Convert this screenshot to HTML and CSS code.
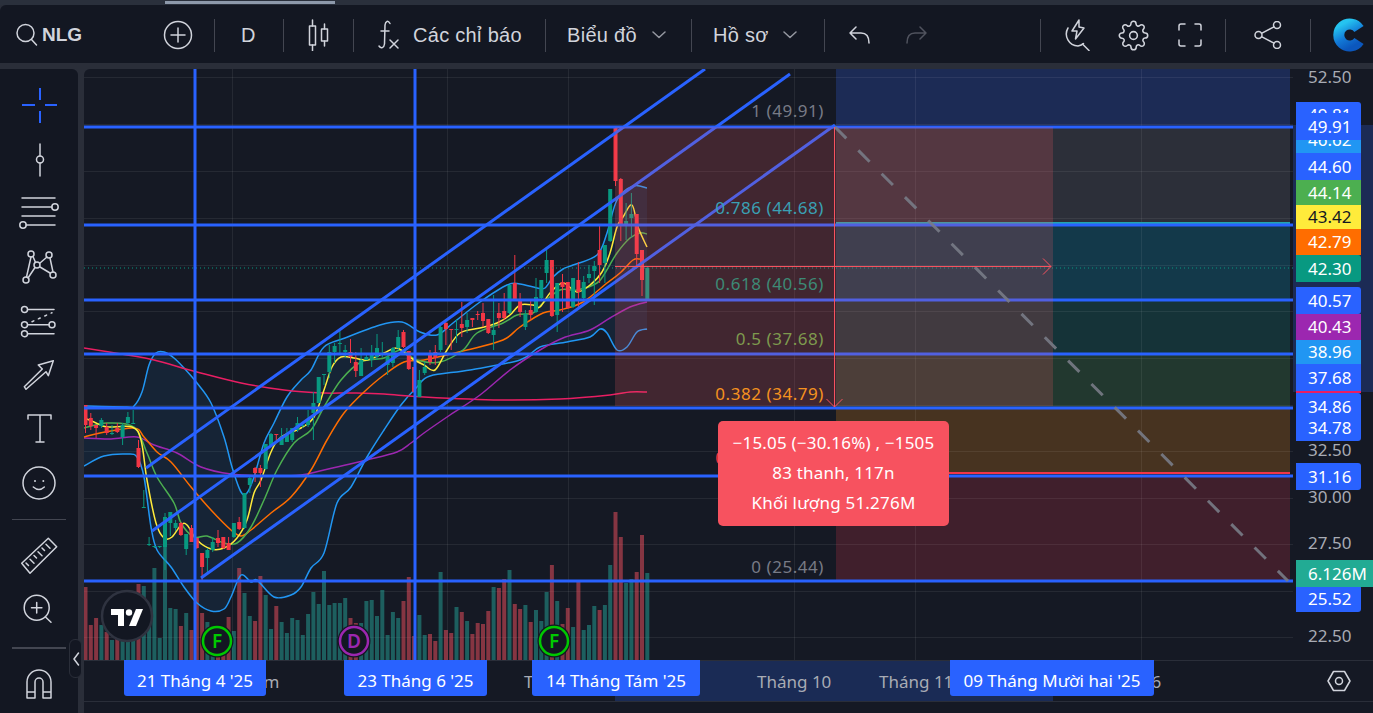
FILE: index.html
```html
<!DOCTYPE html>
<html lang="vi">
<head>
    <meta charset="UTF-8">
    <meta name="viewport" content="width=device-width, initial-scale=1.0">
    <title>NLG - Biểu đồ</title>
    <link rel="stylesheet" href="styles.css">
</head>
<body>
    <div class="top-strip"><span class="scroll-thumb"></span></div>

    <header class="toolbar">
        <div class="cell cell-symbol">
            <svg class="icon" width="24" height="26" viewBox="0 0 24 26"><circle cx="10.5" cy="11" r="8.5"/><path d="M16.5 17.5l5 5.500"/></svg>
            <span class="symbol">NLG</span>
            <svg class="icon add-icon" width="30" height="30" viewBox="0 0 30 30"><circle cx="15" cy="15" r="13.500"/><path d="M15 8v14M8 15h14"/></svg>
        </div>
        <div class="cell cell-interval"><span class="tb-text">D</span></div>
        <div class="cell cell-style">
            <svg class="icon" width="22" height="32" viewBox="0 0 22 32"><path d="M4.500 1v6M4.500 26v6M16.500 5v5M16.500 22v5"/><rect x="1.500" y="7" width="6" height="19"/><rect x="13.500" y="10" width="6" height="12"/></svg>
        </div>
        <div class="cell cell-indicators">
            <svg class="icon" width="22" height="32" viewBox="0 0 22 32"><path d="M12 4.500C10 1 7.500 2 7 6l-.5 19c-.5 4-3.500 5-5.500 2M3 12h8"/><path d="M12 21l8 8M20 21l-8 8"/></svg>
            <span class="tb-text">Các chỉ báo</span>
        </div>
        <div class="cell cell-chart">
            <span class="tb-text">Biểu đồ</span>
            <svg class="icon chevron" width="14" height="8" viewBox="0 0 14 8"><path d="M1 1l6 5.500L13 1"/></svg>
        </div>
        <div class="cell cell-profile">
            <span class="tb-text">Hồ sơ</span>
            <svg class="icon chevron" width="14" height="8" viewBox="0 0 14 8"><path d="M1 1l6 5.500L13 1"/></svg>
        </div>
        <div class="cell cell-history">
            <svg class="icon" width="21" height="18" viewBox="0 0 21 18"><path d="M7 1L1 7l6 6M1 7h11c5 0 8 3 8 10"/></svg>
            <svg class="icon icon-dim redo" width="21" height="18" viewBox="0 0 21 18"><path d="M14 1l6 6-6 6M20 7H9c-5 0-8 3-8 10"/></svg>
        </div>
        <div class="cell cell-actions">
            <svg class="icon" width="28" height="32" viewBox="0 0 28 32"><path d="M6 9A12 12 0 0 0 16 27c2.500-.5 4-1 5.500-2.500"/><path d="M17 1l-7 11h5l-1.500 8L22 9l-5-1z"/><path d="M20.500 25l6.500 6.500"/></svg>
            <svg class="icon gear" width="31" height="31" viewBox="0 0 24 24"><circle cx="12" cy="12" r="3"/><path d="M19.400 15a1.650 1.650 0 0 0 .33 1.820l.06.06a2 2 0 0 1 0 2.830 2 2 0 0 1-2.830 0l-.06-.06a1.650 1.650 0 0 0-1.820-.33 1.650 1.650 0 0 0-1 1.510V21a2 2 0 0 1-2 2 2 2 0 0 1-2-2v-.09A1.650 1.650 0 0 0 9 19.400a1.650 1.650 0 0 0-1.820.33l-.06.06a2 2 0 0 1-2.830 0 2 2 0 0 1 0-2.830l.06-.06a1.650 1.650 0 0 0 .33-1.820 1.650 1.650 0 0 0-1.510-1H3a2 2 0 0 1-2-2 2 2 0 0 1 2-2h.09A1.650 1.650 0 0 0 4.600 9a1.650 1.650 0 0 0-.33-1.820l-.06-.06a2 2 0 0 1 0-2.830 2 2 0 0 1 2.830 0l.06.06a1.650 1.650 0 0 0 1.820.33H9a1.650 1.650 0 0 0 1-1.510V3a2 2 0 0 1 2-2 2 2 0 0 1 2 2v.09a1.650 1.650 0 0 0 1 1.510 1.650 1.650 0 0 0 1.820-.33l.06-.06a2 2 0 0 1 2.830 0 2 2 0 0 1 0 2.830l-.06.06a1.650 1.650 0 0 0-.33 1.820V9a1.650 1.650 0 0 0 1.510 1H21a2 2 0 0 1 2 2 2 2 0 0 1-2 2h-.09a1.650 1.650 0 0 0-1.510 1z"/></svg>
            <svg class="icon" width="24" height="24" viewBox="0 0 24 24"><path d="M7 1H3a2 2 0 0 0-2 2v4M17 1h4a2 2 0 0 1 2 2v4M7 23H3a2 2 0 0 1-2-2v-4M17 23h4a2 2 0 0 0 2-2v-4"/></svg>
        </div>
        <div class="cell cell-share">
            <svg class="icon" width="28" height="28" viewBox="0 0 28 28"><circle cx="4.500" cy="14" r="3.500"/><circle cx="23" cy="4" r="3.500"/><circle cx="23" cy="24" r="3.500"/><path d="M7.500 12.300L20 5.800M7.500 15.700L20 22.200"/></svg>
        </div>
        <div class="cell cell-logo">
            <svg width="33" height="34" viewBox="0 0 33 34">
                <defs><linearGradient id="logoFill" x1="0.2" y1="0" x2="0.7" y2="1"><stop offset="0" stop-color="#25c4f0"/><stop offset="0.55" stop-color="#1279d6"/><stop offset="1" stop-color="#0b57bd"/></linearGradient></defs>
                <path d="M26 11A11 11 0 1 0 26 23" class="logo-ring"/>
            </svg>
        </div>
    </header>

    <div class="workspace">
        <aside class="side-tools">
            <div class="tool"><svg class="tool-icon tool-active" viewBox="0 0 44 44"><path d="M23 5v12M23 28v12M5 22h13M28 22h12"/></svg></div>
            <div class="tool"><svg class="tool-icon" viewBox="0 0 44 44"><path d="M23 7v12M23 26v13"/><circle cx="23" cy="22.500" r="3.500"/></svg></div>
            <div class="tool"><svg class="tool-icon" viewBox="0 0 44 44"><path d="M5 7h33M5 16h30M5 25h33M9 34h29"/><circle cx="38" cy="16" r="3.200"/><circle cx="6" cy="34" r="3.200"/></svg></div>
            <div class="tool"><svg class="tool-icon" viewBox="0 0 44 44"><path d="M14 12L9.500 32M11 33l7-10.500M16 11.500l2.500 6M23 18l7-6M33 13l3 14M23 22l10 6"/><circle cx="14" cy="9" r="3"/><circle cx="32" cy="10" r="3"/><circle cx="20" cy="20" r="3"/><circle cx="9" cy="35" r="3"/><circle cx="36" cy="30" r="3"/></svg></div>
            <div class="tool"><svg class="tool-icon" viewBox="0 0 44 44"><path d="M11 10.500h26M11 25.700h21M11 34.700h26"/><path class="dots" d="M15 22.700L35 13.700"/><circle cx="7.500" cy="10.500" r="3"/><circle cx="7.500" cy="25.700" r="3"/><circle cx="35" cy="25.700" r="3"/><circle cx="7.500" cy="34.700" r="3"/></svg></div>
            <div class="tool"><svg class="tool-icon" viewBox="0 0 44 44"><path d="M7.300 33.700L9 36.300 29 18.700l2.300 4 5-15-15 4.300 4 4z"/></svg></div>
            <div class="tool"><svg class="tool-icon" viewBox="0 0 44 44"><path d="M11 12V8h23v4M23 8v27M19 35h8"/></svg></div>
            <div class="tool"><svg class="tool-icon" viewBox="0 0 44 44"><circle cx="22" cy="22" r="16"/><circle class="solid" cx="18" cy="20" r="1"/><circle class="solid" cx="26.300" cy="20" r="1"/><path d="M16.300 26Q22 31 27.300 26"/></svg></div>
            <div class="tool-rule"></div>
            <div class="tool"><svg class="tool-icon" viewBox="0 0 44 44"><path d="M4.700 29.300L31.300 4.300l8.400 8.400L13 39.300z"/><path d="M9 29l2.500 2.500M13 25.300l4 4M17 21.500l2.500 2.500M21 17.700l4 4M25 14l2.500 2.500M29 10.200l4 4"/></svg></div>
            <div class="tool tool-tight"><svg class="tool-icon" viewBox="0 0 44 44"><circle cx="19.700" cy="21.700" r="12.500"/><path d="M19.700 16.500v10.400M14.500 21.700h10.400M28.500 31l5.500 5.300"/></svg></div>
            <div class="tool-rule tool-rule-heavy"></div>
            <div class="tool"><svg class="tool-icon" viewBox="0 0 44 44"><path d="M10 36V20a12 12 0 0 1 24 0v16h-8V20a4 4 0 0 0-8 0v16zM10 30h8M26 30h8"/></svg></div>
            <button class="collapse-handle"><svg class="icon" width="8" height="14" viewBox="0 0 8 14"><path d="M6.500 1L2 7l4.500 6"/></svg></button>
        </aside>

        <main class="chart-pane">
            <div class="plot">
                <svg class="plot-svg" width="1209" height="591" viewBox="84 69 1209 591">
                    <g id="bands">
                        <rect x="836" y="69" width="454" height="56" fill="#1c2b55"/>
                        <rect x="836" y="127" width="454" height="96" fill="#2c2f39"/>
                        <rect x="836" y="225" width="454" height="75" fill="#13394a"/>
                        <rect x="836" y="300" width="454" height="54" fill="#153338"/>
                        <rect x="836" y="354" width="454" height="54" fill="#22382f"/>
                        <rect x="836" y="408" width="454" height="65" fill="#473320"/>
                        <rect x="836" y="475" width="454" height="106" fill="#401f2c"/>
                    </g>
                    <g id="grid" class="grid"></g>
                    <path id="bbFill" class="bb-fill"/>
                    <g id="volumes"></g>
                    <g id="maLines"></g>
                    <g id="candles"></g>
                    <line class="last-price" x1="84" y1="268" x2="1293" y2="268"/>

                    <g class="fib-edges">
                        <line x1="836" y1="223" x2="1290" y2="223" stroke="#22a5b0"/>
                        <line x1="836" y1="473" x2="1290" y2="473" stroke="#f23645"/>
                    </g>
                    <g class="drawing">
                        <line x1="84" y1="127" x2="1293" y2="127"/>
                        <line x1="84" y1="225" x2="1293" y2="225"/>
                        <line x1="84" y1="300" x2="1293" y2="300"/>
                        <line x1="84" y1="354" x2="1293" y2="354"/>
                        <line x1="84" y1="408" x2="1293" y2="408"/>
                        <line x1="84" y1="476" x2="1293" y2="476"/>
                        <line x1="84" y1="581" x2="1293" y2="581"/>
                        <line x1="195" y1="69" x2="195" y2="660"/>
                        <line x1="415" y1="69" x2="415" y2="660"/>
                        <line x1="146" y1="468" x2="705" y2="69"/>
                        <line x1="152" y1="531" x2="790" y2="74"/>
                        <line x1="201" y1="578" x2="835" y2="125"/>
                    </g>

                    <rect x="615" y="127" width="438" height="279" class="range-fill"/>
                    <line x1="835" y1="127" x2="1288" y2="581" class="fib-trend"/>
                    <g class="measure">
                        <path d="M834.500 127V407M826.500 399l8 8 8-8"/>
                        <path d="M615 266.500H1051M1043 258.500l8 8-8 8"/>
                    </g>

                    <g class="fib-text">
                        <text x="824" y="117" fill="#787b86">1 (49.91)</text>
                        <text x="824" y="214" fill="#3aa0b4">0.786 (44.68)</text>
                        <text x="824" y="290" fill="#3d8a76">0.618 (40.56)</text>
                        <text x="824" y="345" fill="#7e9a4e">0.5 (37.68)</text>
                        <text x="824" y="400" fill="#f5921f">0.382 (34.79)</text>
                        <text x="824" y="464" fill="#f23645">0.236 (31.16)</text>
                        <text x="824" y="573" fill="#787b86">0 (25.44)</text>
                    </g>

                    <g class="tv-logo">
                        <circle cx="127" cy="616" r="25"/>
                        <path class="tv-mark" d="M111 609h13v17h-6v-11h-7z"/>
                        <circle class="tv-mark" cx="129" cy="612.500" r="3.200"/>
                        <path class="tv-mark" d="M136 609h7l-7 17h-7z"/>
                    </g>

                    <g class="badge badge-green"><circle class="halo" cx="217" cy="641" r="16.500"/><circle cx="217" cy="641" r="14"/><text x="217" y="648">F</text></g>
                    <g class="badge badge-purple"><circle class="halo" cx="354" cy="641" r="16.500"/><circle cx="354" cy="641" r="14"/><text x="354" y="648">D</text></g>
                    <g class="badge badge-green"><circle class="halo" cx="554" cy="641" r="16.500"/><circle cx="554" cy="641" r="14"/><text x="554" y="648">F</text></g>
                </svg>
                <div class="measure-tip">
                    <div>−15.05 (−30.16%) , −1505</div>
                    <div>83 thanh, 117n</div>
                    <div>Khối lượng 51.276M</div>
                </div>
            </div>
            <div class="price-axis" id="priceAxis"><div class="axis-range"></div></div>
            <div class="time-axis" id="timeAxis"><div class="time-range"></div></div>
            <div class="axis-corner">
                <svg class="icon" width="24" height="22" viewBox="0 0 24 22"><path d="M6.500 1.500h11L23 11l-5.500 9.500h-11L1 11z"/><circle cx="12" cy="11" r="3.500"/></svg>
            </div>
            <div class="bottom-gutter"></div>
        </main>
    </div>

    <script src="chart.js"></script>
</body>
</html>
```
FILE: styles.css
```css
* {
    box-sizing: border-box;
}
html, body {
    height: 100%;
}
body {
    margin: 0;
    background: #2a2e39;
    font-family: "Liberation Sans", Arial, sans-serif;
    color: #d1d4dc;
    overflow: hidden;
}
.top-strip {
    height: 5px;
    padding-left: 165px;
    padding-top: 1px;
    background: #2a303c;
}
.scroll-thumb {
    display: block;
    width: 170px;
    height: 3px;
    background: #8d99ab;
}

/* top toolbar */
.toolbar {
    height: 58px;
    padding-top: 2px;
    display: flex;
    align-items: center;
    background: #131722;
    border-radius: 6px 0 0 0;
}
.cell {
    height: 33px;
    display: flex;
    align-items: center;
    border-right: 1px solid #434651;
    flex: none;
}
.cell-symbol { width: 215px; padding-left: 15px; }
.cell-interval { width: 69px; padding-left: 26px; }
.cell-style { width: 70px; padding-left: 24px; }
.cell-indicators { width: 192px; padding-left: 24px; gap: 13px; }
.cell-chart { width: 146px; padding-left: 21px; gap: 15px; }
.cell-profile { width: 133px; padding-left: 21px; gap: 14px; }
.cell-history { width: 216px; padding-left: 24px; }
.cell-actions { width: 185px; padding-left: 21px; }
.cell-share { width: 85px; padding-left: 28px; }
.cell-logo { width: 63px; padding-left: 22px; border-right: none; }
.symbol {
    margin-left: 3px;
    font-size: 19px;
    font-weight: 700;
}
.add-icon { margin-left: 81px; }
.tb-text {
    font-size: 20px;
    letter-spacing: 0.3px;
    white-space: nowrap;
}
.icon {
    flex: none;
    fill: none;
    stroke: #d1d4dc;
    stroke-width: 1.500;
    stroke-linecap: round;
    stroke-linejoin: round;
}
.icon-dim { stroke: #50535e; }
.chevron { stroke: #9598a1; }
.redo { margin-left: 36px; }
.gear { margin-left: 28px; stroke-width: 1.200; }
.cell-actions .icon:last-child { margin-left: 29px; }
.logo-ring {
    fill: none;
    stroke: url(#logoFill);
    stroke-width: 11;
}

/* layout under the toolbar */
.workspace {
    height: 650px;
    margin-top: 6px;
    display: flex;
    gap: 6px;
}
.side-tools {
    position: relative;
    width: 78px;
    flex: none;
    padding-top: 9px;
    background: #131722;
    border-radius: 0 6px 0 0;
}
.tool {
    height: 54px;
    display: flex;
    justify-content: center;
    align-items: center;
}
.tool-tight { margin-top: -2px; }
.tool-icon {
    width: 44px;
    height: 44px;
    fill: none;
    stroke: #d1d4dc;
    stroke-width: 1.500;
    stroke-linecap: round;
    stroke-linejoin: round;
}
.tool-active {
    stroke: #2962ff;
    stroke-width: 2;
    stroke-linecap: butt;
}
.tool-icon .solid { fill: #d1d4dc; stroke: none; }
.tool-icon .dots { stroke-dasharray: 2 5; }
.tool-rule {
    height: 1px;
    margin: 9px 12px;
    background: #434651;
}
.tool-rule-heavy {
    height: 2px;
    margin: 12px 12px 8px;
}
.collapse-handle {
    position: absolute;
    left: 69px;
    top: 570px;
    width: 13px;
    height: 39px;
    padding: 0;
    display: flex;
    justify-content: center;
    align-items: center;
    background: #131722;
    border: 1px solid #2a2e39;
    border-radius: 6px;
}

/* chart */
.chart-pane {
    flex: 1;
    display: grid;
    grid-template-columns: 1209px 80px;
    grid-template-rows: 591px 42px 1fr;
    background: #151924;
    border-radius: 6px 0 0 0;
    overflow: hidden;
}
.plot {
    position: relative;
}
.plot-svg {
    display: block;
}
.grid line {
    stroke: #fff;
    stroke-opacity: 0.07;
    stroke-width: 1;
}
.bb-fill {
    fill: #2196f3;
    fill-opacity: 0.09;
}
.ma-line {
    fill: none;
    stroke-width: 1.500;
    stroke-linejoin: round;
}
.wick { stroke-width: 1; }
.last-price {
    stroke: #089981;
    stroke-width: 1;
    stroke-dasharray: 1 3;
}
.fib-edges line {
    stroke-width: 2;
}
.drawing line {
    stroke: #2962ff;
    stroke-width: 3;
}
.range-fill {
    fill: #f55a64;
    fill-opacity: 0.2;
}
.fib-trend {
    stroke: #787b86;
    stroke-opacity: 0.9;
    stroke-width: 3;
    stroke-dasharray: 16 17;
}
.measure path {
    fill: none;
    stroke: #f7525f;
    stroke-width: 1;
}
.fib-text text {
    font-family: "Noto Sans", sans-serif;
    font-size: 17px;
    letter-spacing: 0.55px;
    text-anchor: end;
}
.tv-logo circle:first-child {
    fill: #131722;
    stroke: #2f3340;
    stroke-width: 2.500;
}
.tv-mark {
    fill: #fff;
}
.badge circle {
    fill: #131722;
    stroke-width: 2.500;
}
.badge .halo {
    stroke: none;
}
.badge text {
    font-family: "Noto Sans", sans-serif;
    font-size: 19px;
    font-weight: 600;
    text-anchor: middle;
}
.badge-green circle { stroke: #00c800; }
.badge-green text { fill: #00c800; }
.badge-purple circle { stroke: #9c27b0; }
.badge-purple text { fill: #9c27b0; }
.badge .halo { stroke: none; }
.measure-tip {
    position: absolute;
    left: 634px;
    top: 352px;
    width: 231px;
    height: 105px;
    padding-top: 7px;
    background: #f7525f;
    border-radius: 5px;
    color: #fff;
    font-family: "Noto Sans", sans-serif;
    font-size: 17px;
    letter-spacing: 0.2px;
    line-height: 30px;
    text-align: center;
}

/* axes */
.price-axis, .time-axis {
    position: relative;
    font-family: "Noto Sans", sans-serif;
    font-size: 17px;
}
.price-axis {
    grid-row: 1 / 3;
    grid-column: 2;
    overflow: hidden;
}
.axis-range {
    position: absolute;
    left: 0;
    top: 56px;
    width: 100%;
    height: 267px;
    background: #1c2b55;
}
.price-tick {
    position: absolute;
    left: 15px;
    line-height: 16px;
    color: #a8abb4;
}
.price-tag {
    position: absolute;
    left: 3px;
    width: 65px;
    padding-left: 12px;
    color: #fff;
    white-space: nowrap;
}
.tag-round { border-radius: 0 3px 3px 0; }
.tag-wide { width: 80px; }
.time-axis {
    border-top: 1px solid #2a2e39;
    border-bottom: 1px solid #2a2e39;
}
.time-range {
    position: absolute;
    left: 531px;
    top: 0;
    width: 438px;
    height: 100%;
    background: #1a2b55;
}
.time-tick {
    position: absolute;
    top: 7px;
    line-height: 28px;
    color: #a8abb4;
    white-space: nowrap;
}
.time-tag {
    position: absolute;
    top: -1px;
    height: 36px;
    background: #2962ff;
    border-radius: 0 0 3px 3px;
    color: #fff;
    text-align: center;
    white-space: nowrap;
    line-height: 42px;
}
.axis-corner {
    grid-column: 2;
    grid-row: 2;
    z-index: 1;
    align-self: start;
    height: 42px;
    display: flex;
    justify-content: center;
    align-items: center;
    padding-left: 11px;
    border-top: 1px solid #2a2e39;
    border-bottom: 1px solid #2a2e39;
    background: #151924;
}
```
FILE: chart.js
```js
const NS = 'http://www.w3.org/2000/svg';
const barX = i => 85.5 + 5.3 * i;

// body top, body bottom, wick top, wick bottom, direction (screen y)
const candles = [
    [405,425,405,433,'d'],[418,426,413,430,'d'],[425,428,425,438,'d'],[420,426,418,428,'u'],[427,433,423,435,'d'],
    [433,434,425,435,'u'],[428,432,423,433,'d'],[425,437,423,445,'u'],[417,423,412,425,'u'],[423,424,410,424,'u'],
    [448,467,440,468,'d'],[507,508,490,508,'u'],[544,545,537,546,'u'],[546,547,546,548,'u'],[546,547,546,548,'u'],
    [517,547,513,570,'u'],[512,523,512,536,'u'],[523,528,520,531,'u'],[523,535,522,536,'d'],[534,549,534,555,'u'],
    [528,542,525,542,'d'],[538,548,538,549,'d'],[553,567,553,580,'d'],[550,558,548,575,'u'],[542,550,537,552,'u'],
    [538,543,530,547,'d'],[537,548,537,549,'d'],[543,550,537,550,'d'],[523,537,523,538,'u'],[522,529,517,530,'d'],
    [493,528,493,529,'u'],[478,485,476,493,'u'],[468,473,467,482,'d'],[468,473,465,487,'d'],[444,469,444,470,'u'],
    [434,445,433,447,'u'],[434,435,434,443,'d'],[437,445,428,445,'u'],[435,442,428,442,'u'],[428,440,428,442,'u'],
    [423,430,417,432,'u'],[425,426,422,428,'u'],[419,425,410,427,'u'],[403,413,392,440,'u'],[377,403,377,403,'u'],
    [374,375,374,385,'u'],[352,372,345,378,'u'],[346,352,343,363,'u'],[343,344,330,353,'u'],[350,352,345,358,'u'],
    [352,357,339,363,'d'],[362,371,352,377,'d'],[360,376,348,376,'u'],[357,360,353,360,'u'],[355,360,345,367,'u'],
    [348,357,334,360,'u'],[354,355,342,357,'u'],[357,365,353,375,'u'],[348,363,347,367,'u'],[337,348,330,350,'u'],
    [332,347,330,348,'d'],[351,369,351,370,'d'],[367,392,367,393,'d'],[380,397,370,397,'u'],[367,373,362,375,'u'],
    [355,362,350,365,'d'],[352,358,345,365,'d'],[327,350,325,352,'u'],[323,329,322,345,'d'],[329,330,329,350,'d'],
    [329,330,319,343,'u'],[324,328,302,337,'d'],[320,327,313,333,'u'],[318,320,318,327,'d'],[314,315,311,320,'d'],
    [313,321,303,327,'d'],[319,333,319,334,'d'],[330,335,295,350,'u'],[313,318,303,328,'d'],[311,318,293,320,'d'],
    [285,313,285,314,'u'],[283,299,255,300,'d'],[300,312,293,317,'d'],[314,327,310,330,'u'],[310,315,300,320,'d'],
    [297,312,278,313,'u'],[280,298,280,300,'u'],[260,273,249,283,'u'],[260,316,260,317,'d'],[283,315,283,332,'u'],
    [282,287,274,312,'d'],[282,308,282,309,'d'],[278,307,278,308,'u'],[280,292,262,308,'d'],[282,298,276,300,'u'],
    [274,278,265,283,'u'],[266,271,261,305,'u'],[250,265,225,283,'d'],[245,263,245,283,'u'],[189,241,189,242,'u'],
    [127,181,127,186,'d'],[179,224,178,241,'d'],[221,226,203,240,'u'],[214,218,193,238,'u'],[214,254,214,267,'d'],
    [250,280,250,296,'d'],[268,301,266,301,'u']
];

const volumes = [
    587,625,618,625,632,640,615,620,640,625,584,586,623,568,638,547,608,609,626,613,
    630,582,613,622,630,635,640,617,631,568,593,616,621,576,595,629,606,622,633,618,
    620,635,614,592,604,571,605,603,603,598,618,623,623,601,600,616,590,635,612,618,
    601,577,636,615,635,634,641,572,630,633,607,612,621,634,623,624,611,587,588,579,
    570,604,609,605,622,610,621,592,565,601,624,608,627,580,630,625,606,610,605,565,
    512,537,583,579,572,535,573
];

const bbUpper = [[84,406],[127,407],[134,406],[142,392],[149,365],[156,353],[164,352],[174,358],[184,368],[197,383],[211,403],[224,437],[232,467],[241,492],[247,493],[254,477],[264,443],[274,423],[287,397],[301,380],[311,370],[324,347],[345,338],[380,325],[402,322],[420,332],[437,335],[453,323],[480,302],[507,285],[520,284],[537,288],[545,288],[553,277],[563,269],[573,265],[597,255],[607,233],[617,200],[633,186],[647,188]];
const bbLower = [[84,466],[104,456],[127,454],[137,457],[144,477],[151,527],[157,550],[171,567],[184,587],[197,603],[211,611],[224,609],[231,597],[241,575],[251,582],[257,580],[274,597],[291,595],[301,587],[311,568],[324,553],[337,503],[351,487],[367,457],[384,430],[401,405],[417,387],[430,376],[470,370],[520,360],[540,347],[567,342],[590,337],[600,329],[607,333],[617,350],[627,347],[637,332],[647,329]];

const maLines = [
    ['#e91e63', [[84,348],[127,355],[154,360],[197,372],[241,383],[284,390],[324,393],[351,393],[384,394],[424,397],[500,400],[560,399],[610,395],[630,392],[647,392]]],
    ['#9c27b0', [[84,438],[111,439],[137,437],[154,445],[177,453],[201,467],[231,474],[271,476],[301,475],[324,470],[367,460],[397,452],[411,443],[424,433],[450,415],[480,395],[510,370],[540,350],[563,338],[590,330],[610,318],[630,307],[647,302]]],
    ['#ff6d00', [[84,437],[100,433],[134,428],[144,437],[157,452],[171,462],[191,487],[211,510],[231,530],[241,536],[251,530],[271,513],[291,497],[311,470],[327,440],[344,413],[364,392],[384,375],[404,362],[424,360],[467,350],[503,340],[520,327],[543,313],[560,310],[583,302],[607,283],[620,273],[633,260],[640,259]]],
    ['#4caf50', [[84,428],[107,423],[134,427],[147,453],[157,477],[174,503],[181,523],[194,537],[207,536],[224,543],[237,543],[251,527],[264,500],[277,470],[294,443],[311,430],[324,407],[341,380],[361,362],[384,358],[401,350],[417,360],[440,362],[463,350],[477,333],[503,323],[517,315],[533,313],[543,303],[560,290],[577,290],[597,283],[605,273],[617,253],[630,238],[640,233],[647,234]]],
    ['#ffeb3b', [[84,418],[94,422],[107,427],[132,427],[141,440],[147,480],[156,523],[164,538],[172,537],[181,525],[187,525],[197,540],[211,549],[224,548],[237,538],[247,520],[254,493],[261,480],[271,452],[281,437],[301,428],[314,417],[324,390],[332,367],[341,357],[354,358],[367,360],[384,353],[397,348],[411,358],[424,365],[435,370],[447,350],[460,333],[480,328],[497,323],[510,315],[520,305],[533,305],[540,307],[550,293],[563,283],[577,292],[590,285],[602,272],[610,253],[617,227],[623,217],[632,205],[638,227],[647,247]]]
];

const priceTicks = [['52.50', 77], ['32.50', 450], ['30.00', 497], ['27.50', 543], ['22.50', 636]];

// label, top, height, colour, text colour, extra class
const priceTags = [
    ['46.62', 127, 26, '#2196f3'],
    ['49.81', 102, 26, '#2962ff', '#fff', 'tag-round'],
    ['49.91', 113, 27, '#2962ff'],
    ['44.60', 153, 27, '#2962ff'],
    ['44.14', 180, 25, '#4caf50'],
    ['43.42', 205, 24, '#ffeb3b', '#131722'],
    ['42.79', 229, 26, '#ff6d00'],
    ['42.30', 255, 27, '#089981', '#fff', 'tag-round'],
    ['40.57', 287, 27, '#2962ff', '#fff', 'tag-round'],
    ['40.43', 314, 26, '#9c27b0'],
    ['38.96', 340, 24, '#2196f3'],
    ['', 391, 2, '#e91e63'],
    ['37.68', 364, 27, '#2962ff'],
    ['34.86', 393, 27, '#2962ff', '#fff', 'tag-round'],
    ['34.78', 414, 27, '#2962ff', '#fff', 'tag-round'],
    ['31.16', 463, 27, '#2962ff', '#fff', 'tag-round'],
    ['25.52', 585, 27, '#2962ff', '#fff', 'tag-round'],
    ['6.126M', 560, 27, '#22ab94', '#fff', 'tag-wide']
];

// plain ticks first, the crosshair date tags sit on top of them
const timeTicks = [['Năm', 241], ['Tháng 8', 524], ['Tháng 10', 757], ['Tháng 11', 879], ["'26", 1138]];
const timeTags = [
    ["21 Tháng 4 '25", 124, 142],
    ["23 Tháng 6 '25", 344, 143],
    ["14 Tháng Tám '25", 532, 168],
    ["09 Tháng Mười hai '25", 950, 204]
];

function svgEl(name, attrs, parent) {
    const el = document.createElementNS(NS, name);
    Object.keys(attrs).forEach(k => el.setAttribute(k, attrs[k]));
    parent.appendChild(el);
    return el;
}

// catmull-rom through the points, so the averages do not look like polylines
function smooth(points) {
    let d = `M${points[0][0]} ${points[0][1]}`;
    for (let i = 0; i < points.length - 1; i++) {
        const p0 = points[i - 1] || points[i];
        const p1 = points[i];
        const p2 = points[i + 1];
        const p3 = points[i + 2] || p2;
        const c1x = p1[0] + (p2[0] - p0[0]) / 6;
        const c1y = p1[1] + (p2[1] - p0[1]) / 6;
        const c2x = p2[0] - (p3[0] - p1[0]) / 6;
        const c2y = p2[1] - (p3[1] - p1[1]) / 6;
        d += `C${c1x.toFixed(1)} ${c1y.toFixed(1)} ${c2x.toFixed(1)} ${c2y.toFixed(1)} ${p2[0]} ${p2[1]}`;
    }
    return d;
}

function drawGrid() {
    const grid = document.getElementById('grid');
    [77, 124, 171, 218, 265, 311, 358, 405, 451, 498, 544, 591, 637].forEach(y => {
        svgEl('line', { x1: 84, y1: y + 0.5, x2: 1293, y2: y + 0.5 }, grid);
    });
    [232, 447, 568, 794, 915, 1141].forEach(x => {
        svgEl('line', { x1: x + 0.5, y1: 69, x2: x + 0.5, y2: 660 }, grid);
    });
}

function drawBands() {
    const lowerBack = smooth(bbLower.slice().reverse()).replace('M', 'L');
    document.getElementById('bbFill').setAttribute('d', smooth(bbUpper) + lowerBack + 'Z');
    const group = document.getElementById('maLines');
    [bbUpper, bbLower].forEach(points => {
        svgEl('path', { d: smooth(points), class: 'ma-line', stroke: '#2196f3' }, group);
    });
    maLines.forEach(([colour, points]) => {
        svgEl('path', { d: smooth(points), class: 'ma-line', stroke: colour }, group);
    });
}

function drawSeries() {
    const volumeGroup = document.getElementById('volumes');
    const candleGroup = document.getElementById('candles');
    candles.forEach((c, i) => {
        const x = barX(i);
        const up = c[4] === 'u';
        const colour = up ? '#089981' : '#f23645';
        svgEl('rect', {
            x: (x - 2).toFixed(1), y: volumes[i], width: 4, height: 660 - volumes[i],
            fill: up ? '#26a69a' : '#f5515f', 'fill-opacity': 0.5
        }, volumeGroup);
        svgEl('line', { x1: x, y1: c[2], x2: x, y2: c[3], stroke: colour, class: 'wick' }, candleGroup);
        svgEl('rect', { x: (x - 2).toFixed(1), y: c[0], width: 4, height: c[1] - c[0], fill: colour }, candleGroup);
    });
}

function drawAxes() {
    const priceAxis = document.getElementById('priceAxis');
    priceTicks.forEach(([text, y]) => {
        const tick = document.createElement('span');
        tick.className = 'price-tick';
        tick.textContent = text;
        tick.style.top = `${y - 69 - 8}px`;
        priceAxis.appendChild(tick);
    });
    priceTags.forEach(([text, top, height, colour, ink, extra]) => {
        const tag = document.createElement('span');
        tag.className = `price-tag ${extra || ''}`;
        tag.textContent = text;
        tag.style.top = `${top - 69}px`;
        tag.style.height = `${height}px`;
        tag.style.lineHeight = `${height}px`;
        tag.style.background = colour;
        tag.style.color = ink || '#fff';
        priceAxis.appendChild(tag);
    });

    const timeAxis = document.getElementById('timeAxis');
    timeTicks.forEach(([text, x]) => {
        const tick = document.createElement('span');
        tick.className = 'time-tick';
        tick.textContent = text;
        tick.style.left = `${x - 84}px`;
        timeAxis.appendChild(tick);
    });
    timeTags.forEach(([text, x, width]) => {
        const tag = document.createElement('span');
        tag.className = 'time-tag';
        tag.textContent = text;
        tag.style.left = `${x - 84}px`;
        tag.style.width = `${width}px`;
        timeAxis.appendChild(tag);
    });
}

drawGrid();
drawBands();
drawSeries();
drawAxes();
```
